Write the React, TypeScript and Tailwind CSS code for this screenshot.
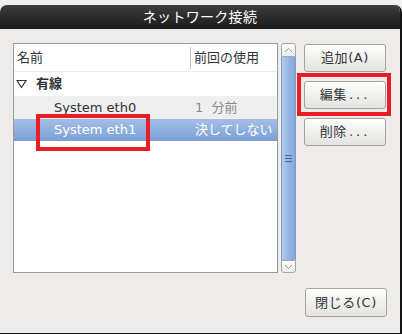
const font = "font-['DejaVu_Sans','Noto_Sans_CJK_JP',sans-serif]";

function Btn({ label }: { label: React.ReactNode }) {
  return (
    <div className="w-[82px] h-[28px] rounded-[3px] border border-[#a3a29e] bg-gradient-to-b from-[#fdfdfc] to-[#e4e3e0] shadow-[inset_0_1px_0_#ffffff] flex items-center justify-center text-[13px] tracking-[0.6px] text-[#2e3436]">
      {label}
    </div>
  );
}

function Dots() {
  return <span className="tracking-[3px] ml-[2px]">...</span>;
}

function Chevron({ up }: { up?: boolean }) {
  return (
    <svg width="9" height="6" viewBox="0 0 9 6">
      <polyline
        points={up ? '1,5 4.5,1.5 8,5' : '1,1 4.5,4.5 8,1'}
        fill="none"
        stroke="#9a9a9a"
        strokeWidth="1"
      />
    </svg>
  );
}

export default function App() {
  return (
    <div className={`w-[402px] h-[334px] bg-[#f0f0ef] pt-[5px] ${font} text-[13px] text-[#2e3436]`}>
      <div className="w-[402px] h-[329px] flex flex-col rounded-t-[7px] overflow-hidden border-r-2 border-b border-[#161616]">
        {/* title bar */}
        <div className="h-[24px] shrink-0 bg-gradient-to-b from-[#3e3e3e] to-[#1b1b1b] text-white text-[14px] tracking-[0.3px] flex items-center justify-center">
          ネットワーク接続
        </div>

        <div className="flex-1 bg-[#edecea] pl-[13px] pt-[14px] flex flex-col">
          <div className="flex h-[230px]">
            {/* list */}
            <div className="w-[265px] h-[230px] border border-[#9c9b98] bg-white flex flex-col">
              <div className="h-[28px] flex items-center border-b border-[#ececec]">
                <div className="w-[176px] pl-[3px]">名前</div>
                <div className="w-px h-[22px] bg-[#c6c6c4]" />
                <div className="pl-[3px]">前回の使用</div>
              </div>
              <div className="h-[24px] flex items-center">
                <svg width="12" height="10" viewBox="0 0 12 10" className="ml-[2px]">
                  <polygon points="1,1.5 10,1.5 5.5,8.5" fill="none" stroke="#2e3436" strokeWidth="1.2" />
                </svg>
                <span className="ml-[8px] font-bold">有線</span>
              </div>
              <div className="h-[23px] flex items-center bg-[#efefef]">
                <div className="w-[176px] pl-[40px]">System eth0</div>
                <div className="pl-[5px] text-[#8a8a88]">1&nbsp;&nbsp;分前</div>
              </div>
              <div className="relative h-[22px] flex items-center bg-gradient-to-b from-[#a3bfe6] to-[#7b9fd5] text-white">
                <div className="w-[176px] pl-[40px]">System eth1</div>
                <div className="pl-[5px]">決してしない</div>
                <div className="absolute left-[22px] top-[-5px] w-[114px] h-[37px] border-4 border-[#ec1c24]" />
              </div>
            </div>

            {/* scrollbar */}
            <div className="ml-[3px] w-[15px] h-[230px] flex flex-col">
              <div className="h-[14px] rounded-t-[3px] border border-[#a8a7a4] bg-gradient-to-b from-[#fbfbfb] to-[#ebebea] flex items-center justify-center">
                <Chevron up />
              </div>
              <div className="flex-1 border-x border-[#7c9bcb] bg-gradient-to-r from-[#b3cbec] via-[#95b5e2] to-[#85a8db] flex items-center justify-center">
                <div className="flex flex-col gap-[2px]">
                  <div className="w-[7px] h-px bg-[#4a6a9a]" />
                  <div className="w-[7px] h-px bg-[#4a6a9a]" />
                  <div className="w-[7px] h-px bg-[#4a6a9a]" />
                </div>
              </div>
              <div className="h-[13px] rounded-b-[3px] border border-[#a8a7a4] bg-gradient-to-b from-[#fbfbfb] to-[#ebebea] flex items-center justify-center">
                <Chevron />
              </div>
            </div>

            {/* buttons */}
            <div className="ml-[8px] pt-[1px] flex flex-col gap-[9px]">
              <Btn label="追加(A)" />
              <div className="relative">
                <Btn label={<>編集<Dots /></>} />
                <div className="absolute left-[-7px] right-[-5px] top-[-8px] bottom-[-7px] border-4 border-[#ec1c24]" />
              </div>
              <Btn label={<>削除<Dots /></>} />
            </div>
          </div>

          <div className="flex justify-end pr-[13px] mt-[15px]">
            <div className="w-[82px] h-[29px] rounded-[3px] border border-[#a3a29e] bg-gradient-to-b from-[#fdfdfc] to-[#e4e3e0] shadow-[inset_0_1px_0_#ffffff] tracking-[0.6px] flex items-center justify-center">
              閉じる(C)
            </div>
          </div>
        </div>
      </div>
    </div>
  );
}
